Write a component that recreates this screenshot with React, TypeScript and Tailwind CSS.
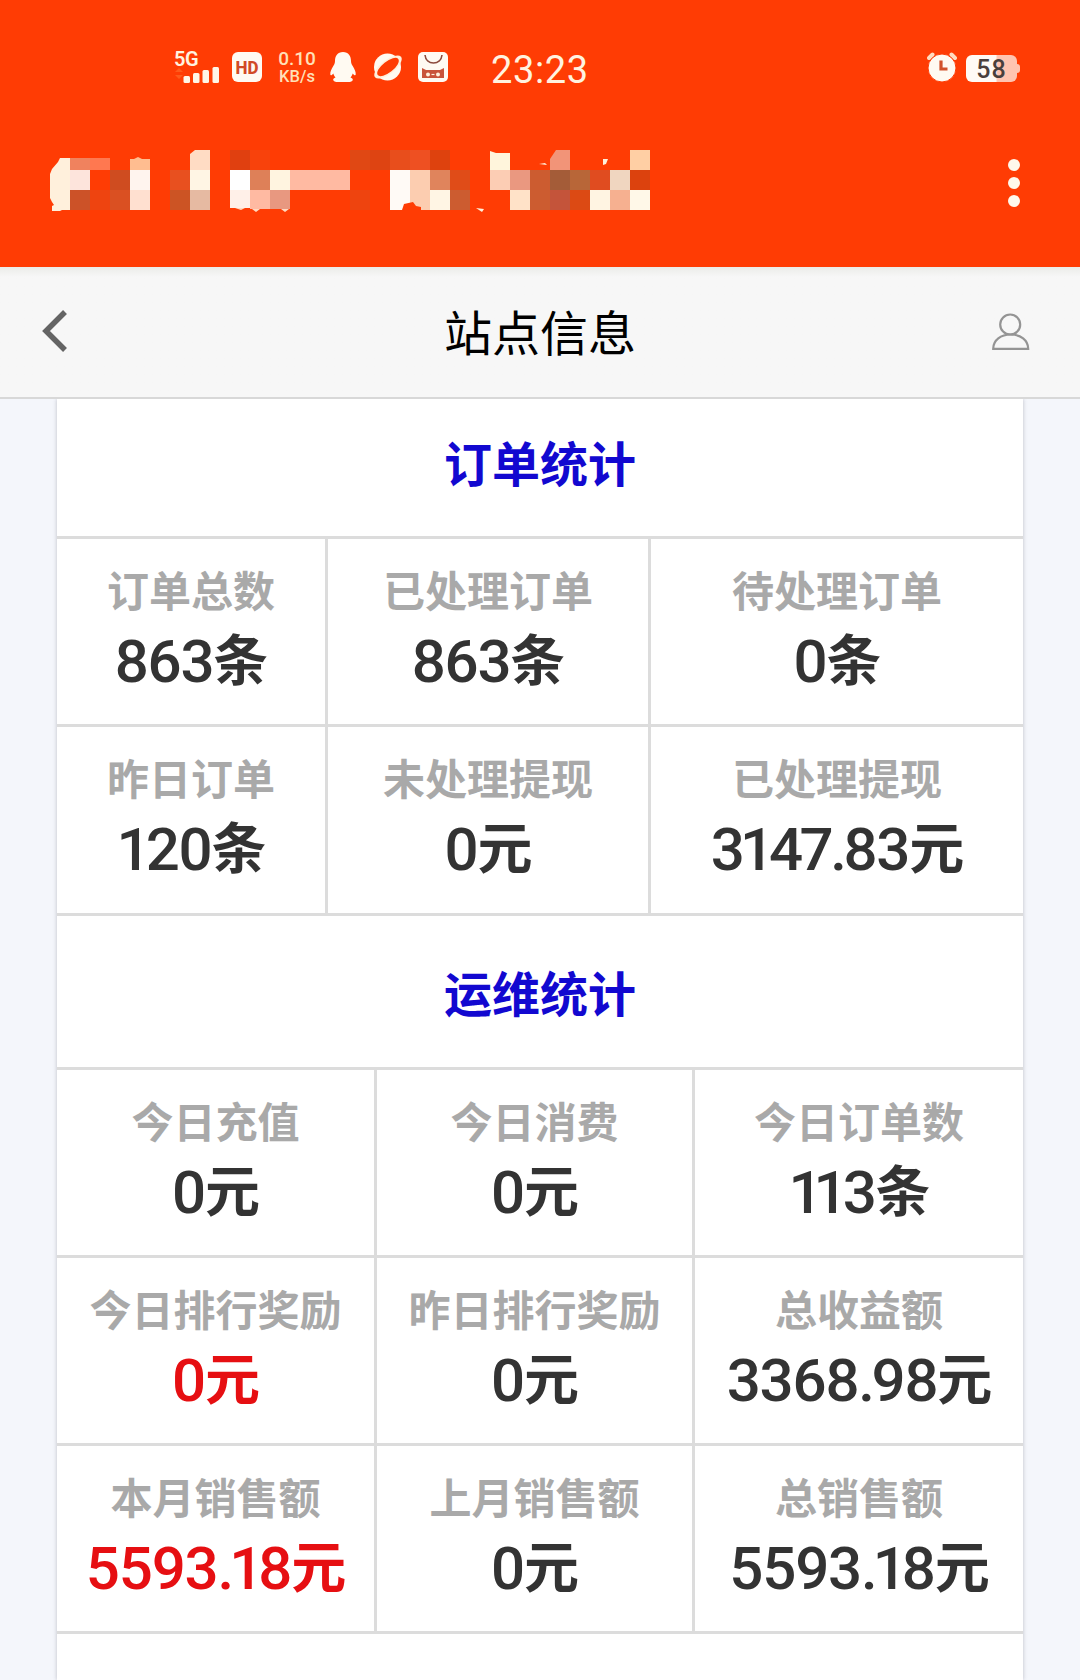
import React from 'react';

type Stat = {
  label: string;
  value: string;
  unit: string;
  highlight?: boolean;
};

const orderStats: Stat[][] = [
  [
    { label: '订单总数', value: '863', unit: '条' },
    { label: '已处理订单', value: '863', unit: '条' },
    { label: '待处理订单', value: '0', unit: '条' },
  ],
  [
    { label: '昨日订单', value: '120', unit: '条' },
    { label: '未处理提现', value: '0', unit: '元' },
    { label: '已处理提现', value: '3147.83', unit: '元' },
  ],
];

const operationStats: Stat[][] = [
  [
    { label: '今日充值', value: '0', unit: '元' },
    { label: '今日消费', value: '0', unit: '元' },
    { label: '今日订单数', value: '113', unit: '条' },
  ],
  [
    { label: '今日排行奖励', value: '0', unit: '元', highlight: true },
    { label: '昨日排行奖励', value: '0', unit: '元' },
    { label: '总收益额', value: '3368.98', unit: '元' },
  ],
  [
    { label: '本月销售额', value: '5593.18', unit: '元', highlight: true },
    { label: '上月销售额', value: '0', unit: '元' },
    { label: '总销售额', value: '5593.18', unit: '元' },
  ],
];

// x, y, width, height, color
const titleBlocks: [number, number, number, number, string][] = [
  [22, 8, 20, 12, '#f0825e'],
  [42, 8, 20, 12, '#ff7850'],
  [22, 20, 20, 20, '#fde4dc'],
  [22, 40, 20, 20, '#cc5228'],
  [42, 40, 20, 20, '#ee4410'],
  [62, 20, 20, 20, '#cf4c20'],
  [62, 40, 20, 20, '#da5022'],
  [82, 9, 20, 11, '#ffbd90'],
  [82, 20, 20, 20, '#fff4ee'],
  [82, 40, 20, 20, '#ffe0d0'],
  [122, 20, 20, 20, '#e8501f'],
  [122, 40, 20, 20, '#cc5424'],
  [142, 20, 20, 20, '#fff5e4'],
  [142, 40, 20, 20, '#e6baa2'],
  [182, 0, 20, 20, '#e04010'],
  [202, 0, 20, 20, '#f8420c'],
  [182, 20, 20, 20, '#ffffff'],
  [182, 40, 20, 18, '#fff0e8'],
  [202, 20, 20, 20, '#de8058'],
  [202, 40, 20, 19, '#ffbaa2'],
  [222, 20, 20, 20, '#fff4e0'],
  [222, 40, 20, 19, '#e89880'],
  [242, 20, 60, 20, '#ffbaa2'],
  [302, 0, 20, 20, '#e04814'],
  [322, 0, 20, 20, '#de4412'],
  [342, 0, 20, 20, '#e84e1c'],
  [362, 0, 20, 20, '#ee5022'],
  [382, 0, 20, 20, '#de420e'],
  [302, 40, 20, 20, '#ee440f'],
  [342, 20, 20, 40, '#fffaf6'],
  [362, 20, 20, 40, '#fccdb0'],
  [382, 20, 20, 20, '#e0845c'],
  [382, 40, 20, 20, '#fff5e4'],
  [402, 20, 20, 20, '#e04c18'],
  [402, 40, 20, 20, '#cc5c30'],
  [442, 20, 20, 20, '#fccdb4'],
  [462, 20, 20, 20, '#ea9880'],
  [462, 40, 20, 20, '#ffe2c8'],
  [482, 20, 20, 40, '#cc5c30'],
  [502, 20, 20, 20, '#a45c38'],
  [502, 40, 20, 20, '#c4543a'],
  [522, 20, 20, 20, '#b86638'],
  [522, 40, 20, 20, '#dc4a14'],
  [542, 20, 20, 20, '#e04c20'],
  [542, 40, 20, 20, '#fff4e2'],
  [562, 20, 20, 20, '#f0d6c0'],
  [562, 40, 20, 20, '#f6b090'],
  [582, 0, 20, 20, '#ffcfa4'],
  [582, 20, 20, 20, '#dc420e'],
  [582, 40, 20, 20, '#fff8e8'],
];

const SignalIcon = () => (
  <div className="flex h-[31px] w-[45px] flex-col justify-between">
    <span className="h-[14px] font-['Roboto'] text-[20px] leading-[15px] font-semibold tracking-[-0.5px]">5G</span>
    <svg width="45" height="16" viewBox="0 0 45 16" fill="#fff6e8">
      <path d="M1 5l4-4 4 4zM1 8l4 4 4-4z" fill="#ff5a1c" />
      <rect x="9.500" y="9" width="6.500" height="7" rx="1.500" />
      <rect x="19" y="6" width="6.500" height="10" rx="1.500" />
      <rect x="28.500" y="3" width="6.500" height="13" rx="1.500" />
      <rect x="38.500" y="0" width="6.500" height="16" rx="1.500" />
    </svg>
  </div>
);

const PenguinIcon = () => (
  <svg width="26" height="30" viewBox="0 0 26 30" fill="#fffaf2">
    <path d="M13 0C7.500 0 5 4 5 9c0 2-.5 3-1.700 5C1.500 17 0 20 .3 22.500c.2 1.500 1.700.7 3-1 .4 1.500 1 2.800 2.200 4-1.500.6-2.300 1.300-2.300 2.200C3.200 29.300 5.500 30 8 30h10c2.500 0 4.800-.7 4.800-2.300 0-.9-.8-1.600-2.300-2.200 1.200-1.200 1.800-2.500 2.200-4 1.300 1.700 2.800 2.500 3 1 .3-2.500-1.200-5.500-3-8.500C21.500 12 21 11 21 9c0-5-2.500-9-8-9z" />
  </svg>
);

const PlanetIcon = () => (
  <svg width="30" height="30" viewBox="0 0 30 30">
    <circle cx="14.500" cy="15" r="13.500" fill="#fffaf2" />
    <ellipse cx="15" cy="15" rx="16.500" ry="7" transform="rotate(-38 15 15)" fill="#fff0dc" />
    <ellipse cx="15" cy="15" rx="13" ry="5.500" transform="rotate(-38 15 15)" fill="#ff3c04" />
  </svg>
);

const BagIcon = () => (
  <svg width="30" height="30" viewBox="0 0 30 30">
    <rect width="30" height="30" rx="5" fill="#fffaf2" />
    <path d="M7 3c.5 5 4 8 8.500 8S23.500 8 24 3" fill="none" stroke="#8c4a3c" strokeWidth="1.600" />
    <path d="M4 16l4 2h14l4-2v10H4z" fill="#c9533a" />
    <circle cx="10" cy="22.500" r="2" fill="#fff0dc" />
    <circle cx="20" cy="22.500" r="2" fill="#fff0dc" />
    <path d="M13.500 22.500h3" stroke="#fff0dc" strokeWidth="1.200" />
  </svg>
);

const AlarmIcon = () => (
  <svg width="30" height="30" viewBox="0 0 30 30">
    <path d="M2 6l3.500-3.500M28 6l-3.500-3.500" stroke="#ffdcc0" strokeWidth="4" strokeLinecap="round" />
    <circle cx="15" cy="16" r="14" fill="#fffaf2" stroke="#ff3c04" strokeWidth="1" />
    <path d="M14 8.500V17h6.500" fill="none" stroke="#d1522c" strokeWidth="3.200" />
  </svg>
);

const StatusBar = () => (
  <div className="flex h-[134px] items-center pr-[60px] pl-[174px] font-['Roboto'] text-[#fff3e0]">
    <SignalIcon />
    <div className="ml-[13px] flex size-[30px] items-center justify-center rounded-[6px] bg-[#fffaf2] text-[#d14a26]">
      <span className="scale-y-110 text-[17px] leading-none font-extrabold">HD</span>
    </div>
    <div className="ml-[16px] flex w-[38px] flex-col items-center whitespace-nowrap text-[#ffe0b8]">
      <span className="h-[16px] text-[19px] leading-[14px] font-medium">0.10</span>
      <span className="h-[15px] text-[16.500px] leading-[17px] font-medium">KB/s</span>
    </div>
    <div className="ml-[14px]"><PenguinIcon /></div>
    <div className="ml-[17px]"><PlanetIcon /></div>
    <div className="ml-[15px]"><BagIcon /></div>
    <span className="ml-[43px] pt-[6px] text-[38px] leading-[40px] tracking-[0.6px]">23:23</span>
    <div className="ml-auto"><AlarmIcon /></div>
    <div className="ml-[9px] flex items-center pt-[3px]">
      <div className="flex h-[27px] w-[51px] items-center justify-center rounded-[6px] bg-linear-to-r from-[#fffaf5] from-58% to-[#ffc4b0] to-62% pt-[2px] text-[25px] leading-none font-medium tracking-[1px] text-[#4a3f3c]">
        58
      </div>
      <div className="h-[9px] w-[3px] rounded-r bg-[#ffc4b0]" />
    </div>
  </div>
);

const MosaicTitle = () => (
  <svg width="604" height="66" viewBox="0 0 604 66" className="shrink-0">
    {titleBlocks.map(([x, y, width, height, color]) => (
      <rect key={`${x}-${y}`} x={x} y={y} width={width} height={height} fill={color} />
    ))}
    <path d="M22 8H12L10 12 4 19 2 24V48l2 4 2 3-2 1v5h8l2-1h8z" fill="#fff0dc" />
    <path d="M142 20V4l5-4h15v20z" fill="#ffdcc4" />
    <path d="M86 9l4-2 4 2z" fill="#ffbd90" />
    <path d="M442 20V1l6 2h14v17z" fill="#fff5dc" />
    <path d="M502 20V9l6-9h14v20z" fill="#f29478" />
    <path d="M187 58l6 2 4-2zM204 59h8l-4 3zM233 59h8l-4 3z" fill="#ffd9c0" />
    <path d="M354 60l2-6 9-2 3 4 5 1v3z" fill="#ff3c04" />
    <path d="M428 58l8 1-2 3zM555 9h5l-2 5-3 1zM491 14l6-1 2 2z" fill="#fff0dc" />
  </svg>
);

const TitleBar = () => (
  <div className="flex h-[133px] items-start justify-between pt-[16px] pr-[60px] pl-[48px]">
    <MosaicTitle />
    <div className="flex flex-col gap-[6px] pt-[9px]">
      <span className="size-[12px] rounded-full bg-[#fff8ec]" />
      <span className="size-[12px] rounded-full bg-[#fff8ec]" />
      <span className="size-[12px] rounded-full bg-[#fff8ec]" />
    </div>
  </div>
);

const NavBar = () => (
  <nav className="grid h-[132px] grid-cols-[1fr_auto_1fr] items-center border-b-2 border-[#d8d8d8] bg-linear-to-b from-[#ebece9] to-[#f7f7f7] to-[10px] pr-[50px] pl-[50px]">
    <svg width="38" height="42" viewBox="0 0 38 42" fill="none" stroke="#646464" strokeWidth="5.500" className="-ml-[9px] mb-[2px]">
      <path d="M24 2L5 21l19 19" />
    </svg>
    <h1 className="pb-[5px] text-[48px] leading-[60px] font-normal text-black">站点信息</h1>
    <svg width="38" height="38" viewBox="0 0 38 38" fill="none" stroke="#949494" strokeWidth="2.200" className="justify-self-end">
      <circle cx="18.200" cy="11.500" r="10" />
      <path d="M1.200 35.800h35C36.200 27 28.500 21.500 18.700 21.500S1.200 27 1.200 35.800z" />
    </svg>
  </nav>
);

const trackingFor = (char: string, next?: string) => {
  if (char === '1' && next === '1') return 'tracking-[-9px]';
  if (char === '1' || next === '1') return 'tracking-[-5px]';
  if ('47.'.includes(char)) return 'tracking-[-3.500px]';
  return 'tracking-[-1.200px]';
};

const StatValue = ({ value }: { value: string }) => (
  <span className="ml-px pt-[4px] font-['Roboto'] text-[60px]">
    {value.split('').map((char, i) => (
      <span key={i} className={trackingFor(char, value[i + 1])}>{char}</span>
    ))}
  </span>
);

const StatCell = ({ stat }: { stat: Stat }) => (
  <div className="flex flex-col items-center overflow-hidden pt-[20px] whitespace-nowrap">
    <span className="text-[42px] leading-[60px] font-bold text-[#a9a9a9]">{stat.label}</span>
    <span className={`flex items-start leading-[78px] font-medium ${stat.highlight ? 'text-[#e60f12]' : 'text-[#333333]'}`}>
      <StatValue value={stat.value} />
      <span className="-mt-[2px] text-[55px] font-bold">{stat.unit}</span>
    </span>
  </div>
);

const SectionTitle = ({ children }: { children: React.ReactNode }) => (
  <h2 className="text-[48px] leading-[60px] font-bold text-[#1208d0]">{children}</h2>
);

export default function App() {
  return (
    <div className="flex h-[1680px] w-[1080px] flex-col overflow-hidden bg-[#f4f6fb] font-['Noto_Sans_CJK_SC',sans-serif]">
      <header className="bg-[#ff3c04]">
        <StatusBar />
        <TitleBar />
      </header>
      <NavBar />
      <main className="mx-[57px] flex-1 bg-white shadow-[0_0_4px_rgba(60,60,80,0.3)] [clip-path:inset(0_-20px)]">
        <div className="flex h-[137px] items-center justify-center pb-[14px]">
          <SectionTitle>订单统计</SectionTitle>
        </div>
        <div className="grid grid-cols-[268px_320px_1fr] grid-rows-[185px_186px] gap-[3px] border-y-[3px] border-[#dcdcdc] bg-[#dcdcdc] *:bg-white">
          {orderStats.flat().map((stat) => (
            <StatCell key={stat.label} stat={stat} />
          ))}
        </div>
        <div className="flex h-[151px] items-center justify-center pb-[2px]">
          <SectionTitle>运维统计</SectionTitle>
        </div>
        <div className="grid grid-cols-[317px_315px_1fr] grid-rows-[185px_185px_185px] gap-[3px] border-y-[3px] border-[#dcdcdc] bg-[#dcdcdc] *:bg-white">
          {operationStats.flat().map((stat) => (
            <StatCell key={stat.label} stat={stat} />
          ))}
        </div>
      </main>
    </div>
  );
}
